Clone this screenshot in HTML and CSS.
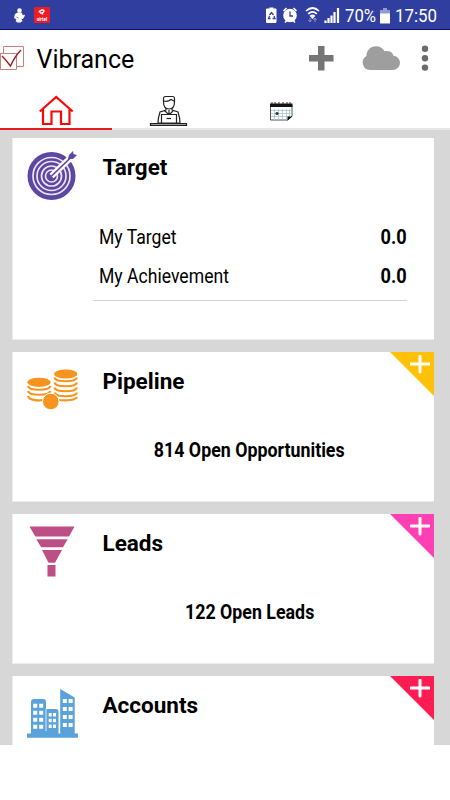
FILE: index.html
```html
<!DOCTYPE html>
<html lang="en">
<head>
    <meta charset="UTF-8">
    <title>Vibrance</title>
    <link rel="stylesheet" href="styles.css">
</head>
<body>
<div class="status">
    <svg class="status-left" width="60" height="30" viewBox="0 0 60 30">
        <g fill="#fff">
            <circle cx="19.500" cy="10.500" r="2.300"/>
            <path d="M17.500 12.500l4 0 1.500 3 1-1 1 1-2 3.500-1.500 0 1 2-2 1.500h-3l-2-1.500 1-1.500-2.500-1.500 1-4z"/>
        </g>
        <path d="M16.500 17l2 1" stroke="#303f9f" stroke-width=".7"/>
        <rect x="34" y="7" width="16" height="16" rx="1" fill="#ed1c24"/>
        <path d="M39 12.500c1-3 5-3 5-1.500s-3 2-4 2M40 13c1 0 3-.5 2.500 1.500" fill="none" stroke="#fff" stroke-width="1.500"/>
        <text x="42" y="20.500" class="airtel">airtel</text>
    </svg>
    <svg class="status-icons" width="80" height="30" viewBox="265 0 80 30">
        <path d="M267.500 8.500h2V7.500h4v1h2q1 0 1 1v12.500q0 1-1 1h-8.500q-1 0-1-1V9.500q0-1 1-1z" fill="#fff"/>
        <path d="M269.500 15l2-2.500 2 2.500M274 16l1 2.500h-2.500M270.500 18.500h-2l1-2.500" fill="none" stroke="#303f9f" stroke-width="1.300"/>
        <circle cx="290" cy="15.500" r="6.800" fill="#fff"/>
        <path d="M283.500 11l3-3M296.500 11l-3-3M285 22.500l2-2M295 22.500l-2-2" stroke="#fff" stroke-width="1.600"/>
        <path d="M290 11.500v4.500h3" fill="none" stroke="#303f9f" stroke-width="1.300"/>
        <path d="M306 11q6.500-6 13 0M308.200 13.800q4.300-4 8.600 0M310.200 16.500q2.300-2 4.600 0" fill="none" stroke="#fff" stroke-width="1.700"/>
        <circle cx="312.500" cy="17.500" r="1.200" fill="#fff"/>
        <path d="M310 18v3M315 19v3M308.500 20l1.500 2 1.500-2M313.500 20l1.500-2 1.500 2" stroke="#8d96cc" fill="none"/>
        <path d="M325.500 23v-2.500M328.500 23v-5M331.500 23v-7.500M334.500 23V12M338 23V8" stroke="#fff" stroke-width="2.200"/>
    </svg>
    <span class="percent">70%</span>
    <svg class="battery" width="12" height="16" viewBox="0 0 12 16">
        <path d="M1 2h3V0h4v2h3v5H1z" fill="#939bcb"/>
        <path d="M1 5.500h10v10H1z" fill="#fff"/>
    </svg>
    <span class="clock">17:50</span>
</div>

<div class="toolbar">
    <svg class="logo" width="24" height="26" viewBox="0 0 24 26" fill="none">
        <path d="M3.500 7V.500h20v20H17M.500 7.500h16v16H.500z" stroke="#c98080"/>
        <path d="M2 10q4 4 8.500 10Q15 10 21 4" stroke="#991b1b" stroke-width="1.400"/>
    </svg>
    <h1 class="title">Vibrance</h1>
    <svg class="actions" width="130" height="28" viewBox="305 45 130 28">
        <path d="M318 46h6.500v9h9v6.500h-9v9H318v-9h-9V55h9z" fill="#757575"/>
        <path d="M370 70a7.500 7.500 0 0 1-3.500-14c0-5.500 4-9.700 9.500-9.700 4.300 0 7 2 8.500 5 4.500-1.200 8 1 9 4.500 4 .5 6.500 3.500 6.500 7s-3 7.200-7 7.200z" fill="#9e9e9e"/>
        <g fill="#6b6b6b">
            <circle cx="425" cy="48.800" r="3.200"/>
            <circle cx="425" cy="58.200" r="3.200"/>
            <circle cx="425" cy="67.600" r="3.200"/>
        </g>
    </svg>
</div>

<div class="tabs">
    <div class="tab active">
        <svg width="36" height="32" viewBox="38 95 36 32">
            <path d="M39.800 111.500L56.200 97l16.500 14.500M43 109v15h8.500v-12.500H61V124h8.500v-15" fill="none" stroke="#f80808" stroke-width="2.200"/>
        </svg>
    </div>
    <div class="tab">
        <svg width="40" height="32" viewBox="148 95 40 32" fill="none" stroke="#222" stroke-width="1.200">
            <path d="M163.500 102v-3.500q0-2 2-2h7q2 0 2 2v3.500q0 7-5.500 7t-5.500-7zM164 101q4 1 7-1.500l3 1.500"/>
            <path d="M166 108v2l-6 2q-2 6-2 11h3.500l1.500-7M172 108v2l6 2q2 6 2 11h-3.500l-1.500-7M165 111l4 4 4-4M169 110v5"/>
            <path d="M161.500 123v-8.500h15v8.500z" fill="#fff"/>
            <path d="M166.500 118.500h4.500"/>
            <path d="M150.500 123.500h36v2h-36z" fill="#999"/>
        </svg>
    </div>
    <div class="tab">
        <svg width="26" height="24" viewBox="269 100 26 24">
            <path d="M270.500 105h21.500v11l-4 4h-17.500z" fill="#fff" stroke="#555"/>
            <path d="M270 103.500h22.500v3.500H270z" fill="#151515"/>
            <path d="M272 102v2M275 102v2M279 102v2M283 102v2M287 102v2M290 102v2" stroke="#333"/>
            <path d="M271 110.500h21M271 113.500h21M271 116.500h18M274.500 109v11M278.500 109v11M282.500 109v11M286.500 109v11M289.500 109v8" stroke="#a8c5ce" stroke-width=".8"/>
            <circle cx="277" cy="113.500" r="1.600" fill="#333"/>
            <path d="M287.500 120.500v-4h5z" fill="#111"/>
        </svg>
    </div>
    <div class="tab"></div>
</div>

<div class="content">
    <div class="card card-target">
        <div class="card-head">
            <svg class="icon" width="54" height="54" viewBox="26 149 54 54">
                <circle cx="51.500" cy="176" r="24" fill="#5e47a3"/>
                <g fill="none" stroke="#e9e5f4" stroke-width="1.700">
                    <circle cx="51.500" cy="176" r="18.500"/>
                    <circle cx="51.500" cy="176" r="14.500"/>
                    <circle cx="51.500" cy="176" r="10"/>
                    <circle cx="51.500" cy="176" r="6"/>
                </g>
                <path d="M51.500 176l22-21" stroke="#fff" stroke-width="6"/>
                <path d="M51.500 176l22-21" stroke="#5e47a3" stroke-width="1.700"/>
                <path d="M68 159l1-4 4-4 .500 3 3.500 1-4 4z" fill="#5e47a3"/>
            </svg>
            <h2>Target</h2>
        </div>
        <div class="rows">
            <div class="row"><span class="label">My Target</span><b>0.0</b></div>
            <div class="row"><span class="label">My Achievement</span><b>0.0</b></div>
        </div>
    </div>

    <div class="card">
        <div class="corner yellow"></div>
        <svg class="plus" width="20" height="20" viewBox="0 0 20 20"><path d="M10 1v16M1 9h18"/></svg>
        <div class="card-head">
            <svg class="icon" width="54" height="54" viewBox="26 363 54 54">
                <g fill="#f7941e">
                    <ellipse cx="39" cy="382.300" rx="11.700" ry="4.600"/>
                    <ellipse cx="65.700" cy="374" rx="11.700" ry="4.600"/>
                </g>
                <g fill="none" stroke="#f7941e" stroke-width="2.200">
                    <path d="M28 386c1 5 21 5 22.500 0M28 391c1 5 21 5 22.500 0M28 396c1 4 9 5 15 4"/>
                    <path d="M54.500 377.500c1 5 21 5 22.500 0M54.500 382.500c1 5 21 5 22.500 0M54.500 387.500c1 5 21 5 22.500 0M54.500 392.500c1 5 21 5 22.500 0M59 400c7 1 17 0 18-3"/>
                </g>
                <circle cx="50.800" cy="401.500" r="8.300" fill="#f7941e" stroke="#fff" stroke-width="1"/>
            </svg>
            <h2>Pipeline</h2>
        </div>
        <p class="count"><span>814 Open Opportunities</span></p>
    </div>

    <div class="card">
        <div class="corner pink"></div>
        <svg class="plus" width="20" height="20" viewBox="0 0 20 20"><path d="M10 1v16M1 9h18"/></svg>
        <div class="card-head">
            <svg class="icon" width="54" height="54" viewBox="26 525 54 54">
                <path d="M29.500 526.500h45L69 536.500H35.300zM36.300 539.200h31.400L63 547.200H41.200zM42 550h20l-7 12.800h-6.500zM47.500 565h8v11.500h-8z" fill="#be4e86"/>
            </svg>
            <h2>Leads</h2>
        </div>
        <p class="count"><span>122 Open Leads</span></p>
    </div>

    <div class="card">
        <div class="corner red"></div>
        <svg class="plus" width="20" height="20" viewBox="0 0 20 20"><path d="M10 1v16M1 9h18"/></svg>
        <div class="card-head">
            <svg class="icon" width="54" height="54" viewBox="26 687 54 54">
                <path d="M27 733.500h4V702q0-3 3-3h9q3 0 3 3v7h10q2.500 0 2.500 3v21.500h1.700V689L74.700 697.500v36h3.300v4.200H27z" fill="#59a2da"/>
                <path d="M46 709v22" stroke="#fff" stroke-width=".8"/>
                <g stroke="#fff" stroke-width="4" stroke-dasharray="4 3">
                    <path d="M35.200 703.700v26M41.200 703.700v26"/>
                </g>
                <g stroke="#fff" stroke-width="3" stroke-dasharray="3.500 2.300">
                    <path d="M50.200 713v15.500M54.500 713v15.500"/>
                </g>
                <g stroke="#fff" stroke-width="4" stroke-dasharray="4 4">
                    <path d="M64.800 699v28.500M70.600 699v28.500"/>
                </g>
            </svg>
            <h2>Accounts</h2>
        </div>
    </div>
</div>
</body>
</html>
```

FILE: styles.css
```css
* {
    padding: 0;
    margin: 0;
    box-sizing: border-box;
}

body {
    width: 450px;
    height: 800px;
    overflow: hidden;
    background: #fff;
    color: #000;
    font-family: Roboto, "Liberation Sans", sans-serif;
}

svg {
    display: block;
    flex-shrink: 0;
}

.status {
    display: flex;
    height: 30px;
    background: #303f9f;
    border-bottom: 1px solid #07106f;
    color: #fff;
    font-size: 19px;
    line-height: 32px;
    white-space: nowrap;
}

.status-icons {
    margin-left: 205px;
}

.airtel {
    fill: #fff;
    font-size: 4.5px;
    font-weight: bold;
    text-anchor: middle;
}

.percent {
    width: 34px;
    transform: scaleX(.88);
    transform-origin: left;
}

.battery {
    margin: 8px 4px 0 0;
}

.clock {
    transform: scaleX(.89);
    transform-origin: left;
}

.toolbar {
    display: flex;
    height: 58px;
}

.logo {
    margin-top: 16px;
}

.title {
    width: 280px;
    padding: 15px 0 0 12.500px;
    font-size: 25px;
    font-weight: normal;
    line-height: 30px;
}

.actions {
    margin: 15px 0 0 1px;
}

.tabs {
    display: flex;
    height: 42px;
    border-bottom: 2px solid #e6e6e6;
}

.tab {
    display: flex;
    justify-content: center;
    width: 112.500px;
    height: 42px;
    padding-top: 7px;
}

.tab:nth-child(3) {
    padding: 12px 0 0 2px;
}

.active {
    width: 112px;
    border-bottom: 2px solid #e51c23;
}

.content {
    height: 615px;
    padding: 8px 16px 0 12px;
    overflow: hidden;
    background: #d7d7d7;
}

.card {
    position: relative;
    height: 150px;
    margin-bottom: 12px;
    padding-top: 11px;
    background: #fff;
    border: solid #ececec;
    border-width: 0 0 1px 1px;
}

.card-target {
    height: 202px;
}

.card-head {
    display: flex;
    height: 54px;
    padding-left: 13px;
}

h2 {
    margin-left: 22.500px;
    padding-top: 4px;
    font-size: 22.500px;
    line-height: 28px;
    font-weight: bold;
}

.rows {
    width: 314px;
    height: 98px;
    margin-left: 80px;
    padding-top: 14px;
    border-bottom: 1px solid #d2d2d2;
    font-size: 20px;
}

.row {
    display: flex;
    justify-content: space-between;
    height: 39px;
    padding-left: 6px;
    line-height: 40px;
}

.label {
    transform: scaleX(.88);
    transform-origin: left;
}

.row b {
    transform: scaleX(.91);
    transform-origin: right;
}

.count {
    margin-left: 80px;
    width: 313px;
    padding-top: 18px;
    font-size: 20px;
    font-weight: bold;
    line-height: 30px;
    text-align: center;
}

.count span {
    display: inline-block;
    transform: scaleX(.89);
}

.corner {
    position: absolute;
    top: 0;
    right: 0;
    width: 44px;
    height: 44px;
    clip-path: polygon(0 0, 100% 0, 100% 100%);
}

.yellow {
    background: #ffc107;
}

.pink {
    background: #ff40b4;
}

.red {
    background: #ff1c53;
}

.plus {
    position: absolute;
    top: 3px;
    right: 4px;
    fill: none;
    stroke: #fff;
    stroke-width: 3;
    stroke-linecap: round;
}
```
